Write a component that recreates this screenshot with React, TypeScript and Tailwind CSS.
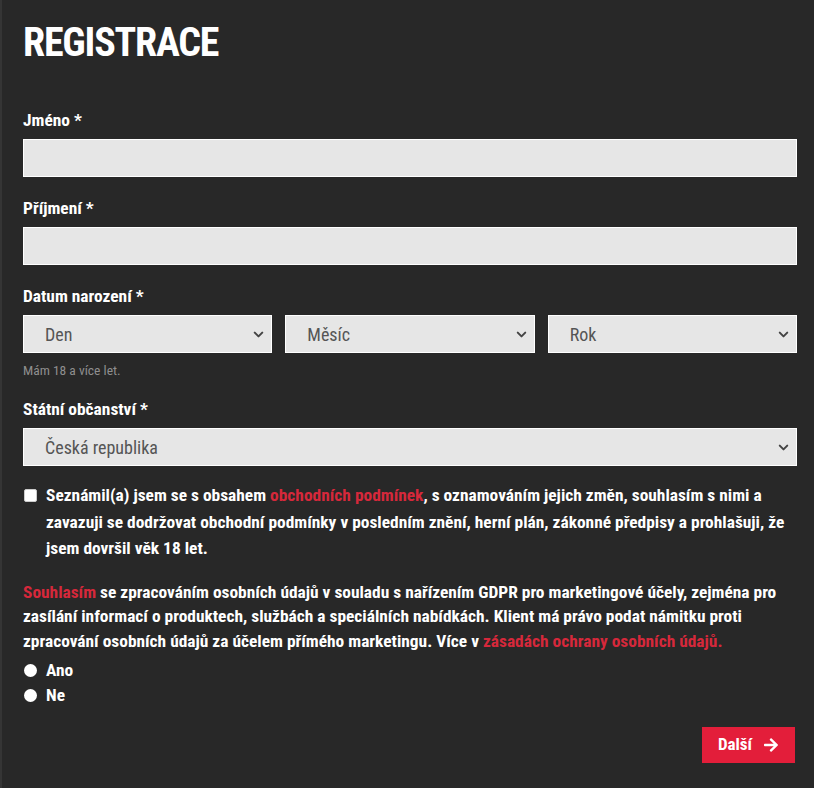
import { ChevronDown } from "lucide-react";

const font = { fontFamily: '"Roboto Condensed", Roboto, "Liberation Sans", sans-serif' };

function Label({ children }: { children: React.ReactNode }) {
  return <div className="text-[17.4px] font-bold leading-[20px] text-white">{children}</div>;
}

function Select({ value, className = "" }: { value: string; className?: string }) {
  return (
    <div className={`flex h-[38px] items-center justify-between border border-white bg-[#e6e6e6] pl-[21px] pr-[5px] text-[18px] text-[#555] ${className}`}>
      <span>{value}</span>
      <ChevronDown className="h-[15px] w-[15px] text-[#444]" strokeWidth={3.2} />
    </div>
  );
}

export default function App() {
  return (
    <div style={font} className="min-h-[788px] border-l-2 border-[#353535] bg-[#282828] pl-[21px] pr-[17px] pt-[21px] pb-[25px]">
      <h1 className="text-[40px] font-bold leading-[44px] tracking-[-1.2px] text-white">REGISTRACE</h1>

      <div className="mt-[45px]">
        <Label>Jméno *</Label>
        <div className="mt-[9px] h-[38px] border border-white bg-[#e6e6e6]" />
      </div>

      <div className="mt-[21px]">
        <Label>Příjmení *</Label>
        <div className="mt-[9px] h-[38px] border border-white bg-[#e6e6e6]" />
      </div>

      <div className="mt-[21px]">
        <Label>Datum narození *</Label>
        <div className="mt-[9px] grid grid-cols-3 gap-[13px]">
          <Select value="Den" />
          <Select value="Měsíc" />
          <Select value="Rok" />
        </div>
        <div className="mt-[9px] text-[13.5px] leading-[16px] text-[#8f8f8f]">Mám 18 a více let.</div>
      </div>

      <div className="mt-[21px]">
        <Label>Státní občanství *</Label>
        <div className="mt-[9px]">
          <Select value="Česká republika" />
        </div>
      </div>

      <div className="mt-[16px] flex gap-[9px] text-[17.4px] font-bold leading-[26.5px] text-white">
        <span className="ml-[1px] mt-[7px] h-[13px] w-[13px] shrink-0 rounded-[2px] border border-[#ccc] bg-white" />
        <p>
          Seznámil(a) jsem se s obsahem <span className="text-[#d6283b]">obchodních podmínek</span>, s oznamováním jejich změn, souhlasím s nimi a zavazuji se dodržovat obchodní podmínky v posledním znění, herní plán, zákonné předpisy a prohlašuji, že jsem dovršil věk 18 let.
        </p>
      </div>

      <p className="mt-[18px] text-[17.4px] font-bold leading-[24.5px] text-white">
        <span className="text-[#d6283b]">Souhlasím</span> se zpracováním osobních údajů v souladu s nařízením GDPR pro marketingové účely, zejména pro zasílání informací o produktech, službách a speciálních nabídkách. Klient má právo podat námitku proti zpracování osobních údajů za účelem přímého marketingu. Více v <span className="text-[#d6283b]">zásadách ochrany osobních údajů.</span>
      </p>

      <div className="mt-[5px] flex flex-col text-[17.4px] font-bold leading-[25px] text-white">
        {["Ano", "Ne"].map((v) => (
          <label key={v} className="flex items-center gap-[9px]">
            <span className="ml-[1px] h-[13px] w-[13px] rounded-full bg-white" />
            {v}
          </label>
        ))}
      </div>

      <div className="mt-[19px] flex justify-end pr-[2px]">
        <button className="flex h-[36px] w-[93px] items-center justify-center gap-[11px] bg-[#e31e3a] text-[17px] font-bold text-white">
          Další
          <svg viewBox="0 0 448 512" className="h-[16px] w-[16px]" fill="currentColor">
            <path d="M190.5 66.9l22.2-22.2c9.4-9.4 24.6-9.4 33.9 0L441 239c9.4 9.4 9.4 24.6 0 33.9L246.6 467.3c-9.4 9.4-24.6 9.4-33.9 0l-22.2-22.2c-9.5-9.5-9.3-25 .4-34.3L311.4 296H24c-13.3 0-24-10.7-24-24v-32c0-13.3 10.7-24 24-24h287.4L190.9 101.2c-9.8-9.3-10-24.8-.4-34.3z" />
          </svg>
        </button>
      </div>
    </div>
  );
}
